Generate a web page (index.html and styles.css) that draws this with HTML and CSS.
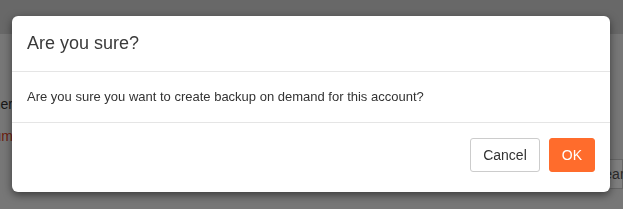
FILE: index.html
```html
<!DOCTYPE html>
<html lang="en">
<head>
    <meta charset="UTF-8">
    <meta name="viewport" content="width=device-width, initial-scale=1.0">
    <title>Backup on demand</title>
    <link rel="stylesheet" href="styles.css">
</head>
<body>
    <div class="page">
        <div class="topbar"></div>
        <div class="page-body">
            <div class="side-left">
                <div class="label">Customer</div>
                <div class="label warn">Premium</div>
            </div>
            <div class="side-right">
                <div class="search">Search</div>
            </div>
        </div>
    </div>

    <div class="backdrop"></div>

    <div class="modal">
        <div class="modal-header">
            <h4 class="modal-title">Are you sure?</h4>
        </div>
        <div class="modal-body">
            Are you sure you want to create backup on demand for this account?
        </div>
        <div class="modal-footer">
            <button class="btn btn-default">Cancel</button>
            <button class="btn btn-primary">OK</button>
        </div>
    </div>
</body>
</html>
```

FILE: styles.css
```css
body {
    margin: 0;
    font-family: "Liberation Sans", Arial, sans-serif;
    background-color: #efefef;
    color: #333;
    height: 209px;
    overflow: hidden;
}
.page {
    height: 209px;
    display: flex;
    flex-direction: column;
}
.topbar {
    height: 34px;
    background-color: #d0d0d0;
}
.page-body {
    flex: 1;
    display: flex;
    justify-content: space-between;
}
.side-left {
    width: 13px;
    overflow: hidden;
    padding-top: 60px;
}
.label {
    display: flex;
    justify-content: flex-end;
    white-space: nowrap;
    font-size: 14px;
    height: 32px;
    line-height: 20px;
}
.label.warn {
    color: #d9411e;
}
.side-right {
    width: 25px;
    overflow: hidden;
    padding-top: 125px;
}
.search {
    white-space: nowrap;
    font-size: 14px;
    color: #555;
    height: 28px;
    line-height: 28px;
    padding-left: 4px;
    margin-left: -8px;
    border: 1px solid #ccc;
    background-color: #fff;
}
.backdrop {
    position: fixed;
    inset: 0;
    background-color: rgba(0, 0, 0, 0.5);
}
.modal {
    position: absolute;
    top: 16px;
    left: 12px;
    width: 598px;
    background-color: #fff;
    border-radius: 6px;
    box-shadow: 0 3px 9px rgba(0, 0, 0, 0.5);
}
.modal-header {
    padding: 15px;
    border-bottom: 1px solid #e5e5e5;
}
.modal-title {
    margin: 0;
    font-size: 18px;
    font-weight: normal;
    line-height: 25px;
    color: #3a3a3a;
}
.modal-body {
    padding: 15px;
    font-size: 13px;
    line-height: 20px;
}
.modal-footer {
    padding: 15px 15px 20px;
    border-top: 1px solid #e5e5e5;
    display: flex;
    justify-content: flex-end;
    gap: 9px;
}
.btn {
    font-family: inherit;
    font-size: 14px;
    line-height: 20px;
    padding: 6px 12px;
    border-radius: 3px;
    border: 1px solid #ccc;
    cursor: pointer;
}
.btn-default {
    background-color: #fff;
    color: #333;
}
.btn-primary {
    background-color: #ff6c2c;
    border-color: #ff6c2c;
    color: #fff;
}
```
